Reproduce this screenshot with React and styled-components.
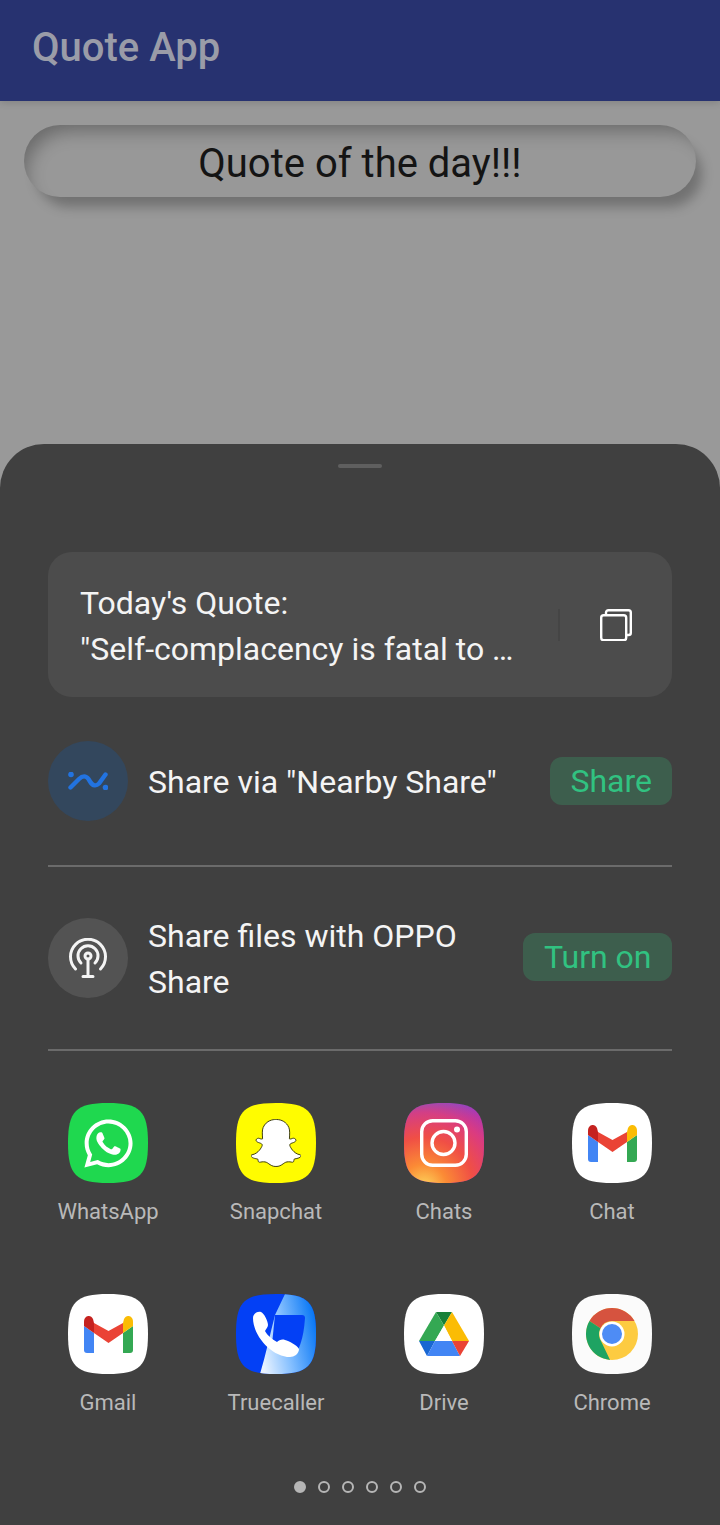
import React from "react";
import styled, { createGlobalStyle } from "styled-components";
import { FaWhatsapp, FaSnapchatGhost } from "react-icons/fa";

const Global = createGlobalStyle`
  html, body { margin: 0; padding: 0; background: #999; }
  * { box-sizing: border-box; }
  body { font-family: Roboto, "Liberation Sans", sans-serif; }
`;

const Page = styled.div`
  width: 720px;
  height: 1525px;
  display: flex;
  flex-direction: column;
  overflow: hidden;
  background: #999;
`;
const AppBar = styled.header`
  height: 101px;
  flex: none;
  background: #273270;
  display: flex;
  align-items: center;
  padding: 0 0 6px 32px;
  color: #9a9ca8;
  font-size: 40px;
  font-weight: 500;
  box-shadow: 0 2px 7px rgba(0, 0, 0, 0.14);
  position: relative;
`;
const Content = styled.main`
  flex: 1;
  padding: 24px 24px 0;
`;
const QuoteButton = styled.div`
  height: 72px;
  border-radius: 36px;
  background: #989898;
  display: flex;
  align-items: center;
  justify-content: center;
  padding-top: 4px;
  color: #141414;
  font-size: 40px;
  box-shadow: inset 10px 14px 18px -8px rgba(0, 0, 0, 0.3), 9px 13px 12px -3px rgba(0, 0, 0, 0.26);
`;
const Sheet = styled.section`
  flex: none;
  height: 1081px;
  background: #404040;
  border-radius: 44px 44px 0 0;
  padding: 20px 48px 0;
  display: flex;
  flex-direction: column;
`;
const Handle = styled.div`
  width: 44px;
  height: 4px;
  border-radius: 2px;
  background: #5f5f5f;
  align-self: center;
  flex: none;
  margin-bottom: 84px;
`;
const QuoteCard = styled.div`
  height: 145px;
  flex: none;
  border-radius: 24px;
  background: #4c4c4c;
  display: flex;
  align-items: center;
  padding: 0 40px 0 32px;
  color: #f4f4f4;
`;
const QuoteText = styled.div`
  width: 478px;
  padding-top: 2px;
  font-size: 32px;
  line-height: 46px;
  white-space: nowrap;
`;
const CardRule = styled.div`
  width: 2px;
  height: 32px;
  background: #454545;
  margin-right: 40px;
  flex: none;
`;
const CopyIcon = styled.svg`
  width: 32px;
  height: 32px;
  flex: none;
`;
const ShareRow = styled.div`
  display: flex;
  align-items: center;
  flex: none;
  height: ${(p) => p.$h}px;
  border-bottom: 2px solid #6b6b6b;
`;
const Round = styled.div`
  width: 80px;
  height: 80px;
  border-radius: 50%;
  background: ${(p) => p.$bg};
  flex: none;
  display: flex;
  align-items: center;
  justify-content: center;
  margin-right: 20px;
`;
const RowText = styled.div`
  flex: 1;
  padding-top: 2px;
  color: #f4f4f4;
  font-size: 32px;
  line-height: 46px;
`;
const Pill = styled.div`
  height: 48px;
  padding: 0 ${(p) => p.$pad}px;
  border-radius: 12px;
  background: #3d5e4d;
  color: #31c281;
  font-size: 32px;
  display: flex;
  align-items: center;
  flex: none;
  margin-bottom: ${(p) => p.$lift || 0}px;
`;
const Grid = styled.div`
  display: grid;
  grid-template-columns: repeat(4, 168px);
  grid-auto-rows: 191px;
  margin: 52px -24px 0;
`;
const AppCell = styled.div`
  display: flex;
  flex-direction: column;
  align-items: center;
  color: #b9b9b9;
  font-size: 22px;
`;
const Tile = styled.div`
  width: 80px;
  height: 80px;
  clip-path: path("M40 0C72 0 80 8 80 40C80 72 72 80 40 80C8 80 0 72 0 40C0 8 8 0 40 0Z");
  background: ${(p) => p.$bg};
  display: flex;
  align-items: center;
  justify-content: center;
  margin-bottom: 16px;
  flex: none;
`;
const Dots = styled.div`
  display: flex;
  justify-content: center;
  gap: 12px;
  margin-top: -4px;
`;
const Dot = styled.span`
  width: 12px;
  height: 12px;
  border-radius: 50%;
  border: 2px solid #b6b6b6;
  background: ${(p) => (p.$on ? "#b6b6b6" : "transparent")};
`;

const Nearby = () => (
  <svg width="40" height="18" viewBox="0 0 40 18" fill="none">
    <path d="M2.5 15.5L11 7C14.5 3.5 18 3.5 20.5 7L22 9.5C25 14.5 28.5 14 31 11.5L37.5 2.5" stroke="#2273e0" strokeWidth="4.4" strokeLinecap="round" />
    <circle cx="3" cy="2.5" r="2.8" fill="#2273e0" />
    <circle cx="37.5" cy="15.5" r="2.8" fill="#2273e0" />
  </svg>
);
const Oppo = () => (
  <svg width="38" height="40" viewBox="0 0 38 40" fill="none" stroke="#f4f4f4" strokeWidth="3" strokeLinecap="round">
    <path d="M6.5 31A17.5 17.5 0 1 1 31.5 31" />
    <path d="M12 25A10 10 0 1 1 26 25" />
    <circle cx="19" cy="18" r="3" />
    <path d="M19 21V38.5M14 38.5H24" />
  </svg>
);
const Mail = () => (
  <svg width="49" height="37" viewBox="0 0 49 37">
    <path d="M0 10L10 17V37H3C1 37 0 36 0 34Z" fill="#4285f4" />
    <path d="M49 10L39 17V37H46C48 37 49 36 49 34Z" fill="#34a853" />
    <path d="M10 7L24.5 15L39 7V17L24.5 27L10 17Z" fill="#ea4335" />
    <path d="M0 6C0 1 3 0 5 0C6.5 0 8 1 9 3L10 7V17L0 10Z" fill="#c5221f" />
    <path d="M49 6C49 1 46 0 44 0C42.5 0 41 1 40 3L39 7V17L49 10Z" fill="#fbbc04" />
  </svg>
);
const Instagram = () => (
  <svg width="48" height="48" viewBox="0 0 48 48" fill="none" stroke="#fff">
    <rect x="1.7" y="1.7" width="44.6" height="44.6" rx="11" strokeWidth="3.4" />
    <circle cx="23.5" cy="24" r="11.5" strokeWidth="3.4" />
    <circle cx="37" cy="10.5" r="3" fill="#fff" stroke="none" />
  </svg>
);
const Caller = () => (
  <svg width="80" height="80" viewBox="0 0 80 80">
    <defs>
      <linearGradient id="tcg" x1="0" y1="0.7" x2="1" y2="0.4">
        <stop offset="0" stopColor="#eaf3ff" />
        <stop offset="0.45" stopColor="#86c0ff" />
        <stop offset="1" stopColor="#0a78f5" />
      </linearGradient>
    </defs>
    <path d="M49 0H80V80H24C30 60 34 40 39 21Z" fill="url(#tcg)" />
    <path d="M39 21H66C68 21 69 22 69 24C68 38 66 48 61 58L36 50Z" fill="#0340f5" />
    <path
      d="M17 24C17 20 21 17 25 18C28 19 32 27 32 31C32 33 30 35 29 37C31 41 37 46 41 48C43 46 46 45 49 46C53 47 61 51 63 55C63 60 58 63 54 63C36 63 17 42 17 24Z"
      fill="#fff"
    />
  </svg>
);
const Drive = () => (
  <svg width="50" height="44" viewBox="0 0 50 44">
    <path d="M17 0H33L25 13.5Z" fill="#188038" />
    <path d="M17 0L25 13.5L16 29H0Z" fill="#34a853" />
    <path d="M33 0L50 29H33L25 13.5Z" fill="#fbbc04" />
    <path d="M0 29H16L8 44Z" fill="#1967d2" />
    <path d="M16 29H33L41 44H8Z" fill="#4285f4" />
    <path d="M33 29H50L41 44Z" fill="#ea4335" />
    <path d="M25 13.5L33 29H16Z" fill="#fff" />
  </svg>
);
const Chrome = () => (
  <svg width="52" height="52" viewBox="0 0 54 54">
    <circle cx="27" cy="27" r="27" fill="#fdcb41" />
    <path d="M27 0A27 27 0 0 1 50.4 13.5H27A13.5 13.5 0 0 0 15 21L3.6 13.5A27 27 0 0 1 27 0Z" fill="#d6533f" />
    <path d="M3.6 13.5L15 21C13 25 13 30 15.3 33.8L25 53.9A27 27 0 0 1 3.6 13.5Z" fill="#1ea362" />
    <circle cx="27" cy="27" r="13" fill="#fff" />
    <circle cx="27" cy="27" r="10.4" fill="#4e8cf5" />
  </svg>
);

const apps = [
  { name: "WhatsApp", bg: "#1fd84f", icon: <FaWhatsapp size={55} color="#fff" /> },
  { name: "Snapchat", bg: "#fffc00", icon: <FaSnapchatGhost size={50} color="#fff" stroke="#3a3a10" strokeWidth="10" /> },
  {
    name: "Chats",
    bg: "radial-gradient(circle at 25% 105%, #fdd75c 0%, #fb8b35 22%, #f04f45 48%, rgba(226, 60, 120, 0.85) 72%, transparent 92%), linear-gradient(160deg, #5f5fe0 0%, #a836b8 35%, #c4359b 100%)",
    icon: <Instagram />,
  },
  { name: "Chat", bg: "#fff", icon: <Mail /> },
  { name: "Gmail", bg: "#fff", icon: <Mail /> },
  { name: "Truecaller", bg: "#0340f5", icon: <Caller /> },
  { name: "Drive", bg: "#fff", icon: <Drive /> },
  { name: "Chrome", bg: "#fbfbfb", icon: <Chrome /> },
];

export default function App() {
  return (
    <Page>
      <Global />
      <AppBar>Quote App</AppBar>
      <Content>
        <QuoteButton>Quote of the day!!!</QuoteButton>
      </Content>
      <Sheet>
        <Handle />
        <QuoteCard>
          <QuoteText>
            Today's Quote:
            <br />
            "Self-complacency is fatal to …
          </QuoteText>
          <CardRule />
          <CopyIcon viewBox="0 0 32 32" fill="none" stroke="#fff" strokeWidth="2.4" strokeLinejoin="round">
            <rect x="1.2" y="6.2" width="25" height="25" rx="2.5" />
            <path d="M6 6V3.5C6 2 7 1.2 8.5 1.2H28.5C30 1.2 30.8 2 30.8 3.5V24C30.8 25.5 30 26 28.5 26H26" />
          </CopyIcon>
        </QuoteCard>
        <ShareRow $h={170}>
          <Round $bg="#33475d">
            <Nearby />
          </Round>
          <RowText>Share via "Nearby Share"</RowText>
          <Pill $pad={20}>Share</Pill>
        </ShareRow>
        <ShareRow $h={184}>
          <Round $bg="#535353">
            <Oppo />
          </Round>
          <RowText>
            Share files with OPPO
            <br />
            Share
          </RowText>
          <Pill $pad={20.5} $lift={2}>Turn on</Pill>
        </ShareRow>
        <Grid>
          {apps.map((a) => (
            <AppCell key={a.name}>
              <Tile $bg={a.bg}>{a.icon}</Tile>
              {a.name}
            </AppCell>
          ))}
        </Grid>
        <Dots>
          {[0, 1, 2, 3, 4, 5].map((i) => (
            <Dot key={i} $on={i === 0} />
          ))}
        </Dots>
      </Sheet>
    </Page>
  );
}
